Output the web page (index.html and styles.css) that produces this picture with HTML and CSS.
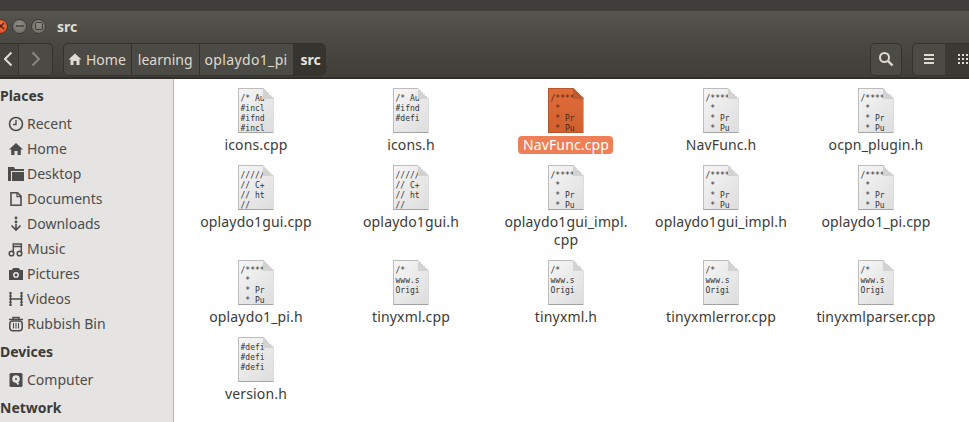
FILE: index.html
```html
<!DOCTYPE html>
<html lang="en">
<head>
<meta charset="utf-8">
<title>src</title>
<link rel="stylesheet" href="styles.css">
</head>
<body>
<div class="window">
  <div class="desktop-strip"></div>
  <header class="titlebar">
    <div class="win-buttons">
      <span class="win-btn close"><svg width="8" height="8" viewBox="0 0 8 8"><path d="M1 1l6 6M7 1L1 7" stroke="#5c2010" stroke-width="1.5"/></svg></span>
      <span class="win-btn"><svg width="8" height="8" viewBox="0 0 8 8"><path d="M0 4h8" stroke="#3c3b37" stroke-width="1.4"/></svg></span>
      <span class="win-btn"><svg width="8" height="8" viewBox="0 0 8 8"><rect x=".5" y=".5" width="7" height="7" rx="1" fill="none" stroke="#3c3b37"/></svg></span>
    </div>
    <span class="win-title">src</span>
  </header>
  <div class="toolbar">
    <div class="nav-group">
      <span class="nav-btn back"><svg width="10" height="16" viewBox="0 0 10 16"><path d="M7.500 1.500L1 8l6.500 6.500" fill="none" stroke="#dfdbd2" stroke-width="2"/></svg></span>
      <span class="nav-btn fwd"><svg width="10" height="16" viewBox="0 0 10 16"><path d="M1.500 1.500L8 8l-6.500 6.500" fill="none" stroke="#8a877f" stroke-width="2"/></svg></span>
    </div>
    <nav class="crumbs">
      <span class="crumb home"><svg width="14" height="14" viewBox="0 0 14 14"><path d="M7 1.500L0.500 7.500H2.500V13H5.500V9H8.500V13H11.500V7.500H13.500Z" fill="#dfdbd2"/></svg>Home</span>
      <span class="crumb learning">learning</span>
      <span class="crumb project">oplaydo1_pi</span>
      <span class="crumb current">src</span>
    </nav>
    <div class="tool-right">
      <span class="tool-btn search"><svg width="16" height="16" viewBox="0 0 16 16"><circle cx="6.500" cy="6.500" r="4.500" fill="none" stroke="#dfdbd2" stroke-width="2"/><path d="M10 10l4.500 4.500" stroke="#dfdbd2" stroke-width="2.400"/></svg></span>
      <div class="view-group">
        <span class="view-btn"><svg width="12" height="12" viewBox="0 0 12 12"><path d="M1 2h10M1 6h10M1 10h10" stroke="#dfdbd2" stroke-width="2"/></svg></span>
        <span class="view-btn active"><svg width="12" height="12" viewBox="0 0 12 12"><path d="M1 1h2v2H1zM5 1h2v2H5zM9 1h2v2H9zM1 5h2v2H1zM5 5h2v2H5zM9 5h2v2H9zM1 9h2v2H1zM5 9h2v2H5zM9 9h2v2H9z" fill="#dfdbd2"/></svg></span>
      </div>
    </div>
  </div>
  <div class="body">
    <aside class="sidebar">
      <div class="side-title">Places</div>
      <div class="side-row"><svg viewBox="0 0 16 16"><circle cx="8" cy="8" r="6.500" fill="none" stroke="#4c4c4c" stroke-width="1.600"/><path d="M8 4v4.500h-3" fill="none" stroke="#4c4c4c" stroke-width="1.400"/></svg>Recent</div>
      <div class="side-row"><svg viewBox="0 0 16 16"><path d="M8 2L1 8.500H3.200V14H6.500V10H9.500V14H12.800V8.500H15Z" fill="#4c4c4c"/></svg>Home</div>
      <div class="side-row"><svg viewBox="0 0 16 16"><path d="M0 1h6l1 2h9v2H3v10H0z" fill="#4c4c4c"/><path d="M4 6h12v9H4z" fill="#4c4c4c"/></svg>Desktop</div>
      <div class="side-row"><svg viewBox="0 0 16 16"><path d="M3 1.700h6.500L13 5.200v9.100H3z" fill="none" stroke="#4c4c4c" stroke-width="1.600"/><path d="M9 1.700v4h4" fill="none" stroke="#4c4c4c" stroke-width="1.200"/></svg>Documents</div>
      <div class="side-row"><svg viewBox="0 0 16 16"><circle cx="8" cy="2" r="1.400" fill="#4c4c4c"/><circle cx="8" cy="6" r="1.400" fill="#4c4c4c"/><path d="M8 8v5M3.500 9.500L8 14l4.500-4.500" fill="none" stroke="#4c4c4c" stroke-width="1.600"/></svg>Downloads</div>
      <div class="side-row"><svg viewBox="0 0 16 16"><circle cx="3.500" cy="12.500" r="2.300" fill="none" stroke="#4c4c4c" stroke-width="1.500"/><circle cx="11.500" cy="12.500" r="2.300" fill="none" stroke="#4c4c4c" stroke-width="1.500"/><path d="M5.300 12V3h8v9M5.300 5.500h8" fill="none" stroke="#4c4c4c" stroke-width="1.500"/></svg>Music</div>
      <div class="side-row"><svg viewBox="0 0 16 16"><path fill-rule="evenodd" d="M1 4h3l1-2h6l1 2h3v10H1zM8 6a3 3 0 100 6 3 3 0 000-6z" fill="#4c4c4c"/><circle cx="8" cy="9" r="1.500" fill="#4c4c4c"/></svg>Pictures</div>
      <div class="side-row"><svg viewBox="0 0 16 16"><path d="M2.500 1v14M13.500 1v14M2.500 8h11" fill="none" stroke="#4c4c4c" stroke-width="1.500"/><path d="M1 2h3M1 5h3M1 8h3M1 11h3M1 14h3M12 2h3M12 5h3M12 8h3M12 11h3M12 14h3" stroke="#4c4c4c" stroke-width="1.200"/></svg>Videos</div>
      <div class="side-row"><svg viewBox="0 0 16 16"><path d="M1 3.500h14M5 3V1.500h6V3" fill="none" stroke="#4c4c4c" stroke-width="1.500"/><rect x="1.800" y="5" width="12.400" height="9.800" rx="3" fill="none" stroke="#4c4c4c" stroke-width="1.500"/><path d="M5.500 7v5.500M8 7v5.500M10.500 7v5.500" stroke="#4c4c4c" stroke-width="1.100"/></svg>Rubbish Bin</div>
      <div class="side-title">Devices</div>
      <div class="side-row"><svg viewBox="0 0 16 16"><rect x="1.500" y="1" width="13" height="14" rx="1.500" fill="#4c4c4c"/><circle cx="8" cy="7" r="3.800" fill="#e6e4e2"/><circle cx="8" cy="7" r="1" fill="#4c4c4c"/><path d="M8 9l2.500 3.500" stroke="#e6e4e2" stroke-width="2"/></svg>Computer</div>
      <div class="side-title">Network</div>
    </aside>
    <main class="files">
      <div class="file"><div class="doc"><div class="doc-text">/* Au<br>#incl<br>#ifnd<br>#incl</div></div><div class="file-name">icons.cpp</div></div>
      <div class="file"><div class="doc"><div class="doc-text">/* Au<br>#ifnd<br>#defi</div></div><div class="file-name">icons.h</div></div>
      <div class="file selected"><div class="doc"><div class="doc-text">/****<br> *<br> * Pr<br> * Pu</div></div><div class="file-name">NavFunc.cpp</div></div>
      <div class="file"><div class="doc"><div class="doc-text">/****<br> *<br> * Pr<br> * Pu</div></div><div class="file-name">NavFunc.h</div></div>
      <div class="file"><div class="doc"><div class="doc-text">/****<br> *<br> * Pr<br> * Pu</div></div><div class="file-name">ocpn_plugin.h</div></div>
      <div class="file"><div class="doc"><div class="doc-text">/////<br>// C+<br>// ht<br>//</div></div><div class="file-name">oplaydo1gui.cpp</div></div>
      <div class="file"><div class="doc"><div class="doc-text">/////<br>// C+<br>// ht<br>//</div></div><div class="file-name">oplaydo1gui.h</div></div>
      <div class="file"><div class="doc"><div class="doc-text">/****<br> *<br> * Pr<br> * Pu</div></div><div class="file-name">oplaydo1gui_impl.<br>cpp</div></div>
      <div class="file"><div class="doc"><div class="doc-text">/****<br> *<br> * Pr<br> * Pu</div></div><div class="file-name">oplaydo1gui_impl.h</div></div>
      <div class="file"><div class="doc"><div class="doc-text">/****<br> *<br> * Pr<br> * Pu</div></div><div class="file-name">oplaydo1_pi.cpp</div></div>
      <div class="file"><div class="doc"><div class="doc-text">/****<br> *<br> * Pr<br> * Pu</div></div><div class="file-name">oplaydo1_pi.h</div></div>
      <div class="file"><div class="doc"><div class="doc-text">/*<br>www.s<br>Origi</div></div><div class="file-name">tinyxml.cpp</div></div>
      <div class="file"><div class="doc"><div class="doc-text">/*<br>www.s<br>Origi</div></div><div class="file-name">tinyxml.h</div></div>
      <div class="file"><div class="doc"><div class="doc-text">/*<br>www.s<br>Origi</div></div><div class="file-name">tinyxmlerror.cpp</div></div>
      <div class="file"><div class="doc"><div class="doc-text">/*<br>www.s<br>Origi</div></div><div class="file-name">tinyxmlparser.cpp</div></div>
      <div class="file"><div class="doc"><div class="doc-text">#defi<br>#defi<br>#defi</div></div><div class="file-name">version.h</div></div>
    </main>
  </div>
</div>
</body>
</html>
```
FILE: styles.css
```css
* { box-sizing: border-box; }
html, body { margin: 0; padding: 0; height: 100%; overflow: hidden; background: #fff; }
body { font-family: "Noto Sans", "Open Sans", sans-serif; font-size: 14px; }
.window { display: flex; flex-direction: column; width: 969px; height: 422px; overflow: hidden; }
.desktop-strip { height: 11px; background: #3f3e3a; flex: none; }
.titlebar {
  height: 30px; flex: none; display: flex; align-items: center;
  background: linear-gradient(#575550, #4a4842);
}
.win-buttons { display: flex; gap: 4px; margin-left: -7px; }
.win-btn {
  width: 15px; height: 15px; border-radius: 50%; display: flex; align-items: center; justify-content: center;
  background: radial-gradient(circle at 50% 35%, #8f8c83, #6b6861); border: 1px solid #3a3935;
}
.win-btn.close { background: radial-gradient(circle at 50% 35%, #f0764a, #d5491f); }
.win-title { margin-left: 11px; font-weight: 700; font-size: 14px; color: #dfdbd2; }
.toolbar {
  height: 38px; flex: none; display: flex; align-items: center;
  background: linear-gradient(#4a4842, #403e39); border-bottom: 2px solid #2f2e2b;
}
.nav-group { display: flex; height: 33px; width: 53px; border: 1px solid #33322e; border-left: 0; border-radius: 0 5px 5px 0; overflow: hidden; background: #4c4a44; flex: none; }
.nav-btn { display: flex; align-items: center; justify-content: center; }
.nav-btn.back { width: 19px; border-right: 1px solid #383733; background: #45433e; }
.nav-btn.fwd { flex: 1; }
.crumbs { display: flex; height: 33px; margin-left: 10px; border: 1px solid #33322e; border-radius: 5px; overflow: hidden; background: #4c4a44; color: #dfdbd2; flex: none; }
.crumb { display: flex; align-items: center; gap: 4px; padding: 0 6px; border-right: 1px solid #33322e; }
.crumb.home { padding-left: 4px; padding-right: 5px; }
.crumb.project { letter-spacing: .35px; padding: 0 5px; }
.crumb.current { background: #35342f; font-weight: 700; border-right: 0; padding: 0 4px 0 7px; color: #e8e4dc; }
.tool-right { display: flex; margin-left: auto; gap: 10px; margin-right: -18px; flex: none; }
.tool-btn { width: 32px; height: 33px; border: 1px solid #33322e; border-radius: 5px; background: #4c4a44; display: flex; align-items: center; justify-content: center; }
.view-group { display: flex; height: 33px; width: 75px; border: 1px solid #33322e; border-radius: 5px; overflow: hidden; background: #4c4a44; }
.view-btn { display: flex; align-items: center; justify-content: center; width: 32px; }
.view-btn.active { background: #3a3934; flex: 1; justify-content: flex-start; padding-left: 12px; }
.body { flex: 1; display: flex; min-height: 0; }
.sidebar { width: 174px; flex: none; background: #e6e4e2; border-right: 1px solid #b5b3b0; padding-top: 1px; color: #4c4c4c; }
.side-title { height: 31px; display: flex; align-items: center; font-weight: 700; color: #3c3b37; }
.side-row { height: 25px; display: flex; align-items: center; padding-left: 8px; gap: 3px; }
.side-row svg { width: 16px; height: 16px; flex: none; }
.files {
  flex: 1; display: grid; grid-template-columns: repeat(5, 155px); align-content: start; align-items: start;
  padding: 9px 0 0 4px; background: #fff;
}
.file { display: flex; flex-direction: column; align-items: center; color: #3c3b37; margin-bottom: 11px; }
.doc {
  width: 36px; height: 45px; padding: 5px 0 0 2px; flex: none;
  background: linear-gradient(135deg, #f6f6f6, #dddddd);
  border: 1px solid #bdbdbd; border-bottom-color: #a4a4a4;
  clip-path: polygon(0 0, 72% 0, 100% 22%, 100% 100%, 0 100%);
  position: relative;
}
.doc::after {
  content: ""; position: absolute; right: -1px; top: -1px; width: 11px; height: 11px;
  background: linear-gradient(225deg, #fff 50%, #d2d2d2 50%);
}
.doc-text { font-family: "DejaVu Sans Mono", "Liberation Mono", monospace; font-size: 8px; line-height: 10px; white-space: pre; color: #333; }
.file-name { margin-top: 3px; padding: 0 4px 0 5px; text-align: center; line-height: 18px; border-radius: 4px; white-space: nowrap; letter-spacing: .15px; }
.selected .doc { background: linear-gradient(#e06c3a, #d2602f); border-color: #b9552a; }
.selected .doc::after { background: linear-gradient(225deg, #fff 50%, #c05a2e 50%); }
.selected .doc-text { color: #4a2716; }
.selected .file-name { background: #ee7f56; color: #fff; }
```
